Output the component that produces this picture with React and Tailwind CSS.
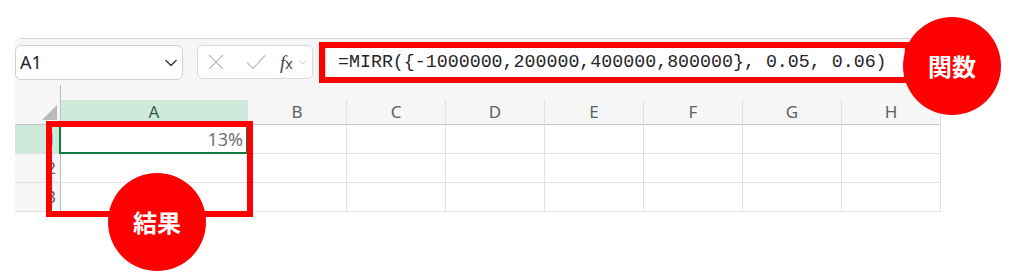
import React from 'react';

// Columnas y filas visibles de la hoja
const columnas = ['A', 'B', 'C', 'D', 'E', 'F', 'G', 'H'];
const filas = [1, 2, 3];

const Chevron = ({ className }) => (
  <svg viewBox="0 0 12 8" className={className} fill="none" stroke="currentColor" strokeWidth="1.6" strokeLinecap="round" strokeLinejoin="round">
    <path d="M1 1.5 6 6.5 11 1.5" />
  </svg>
);

const Etiqueta = ({ texto, className }) => (
  <div className={`absolute w-[98px] h-[98px] rounded-full bg-[#ff0000] flex items-center justify-center text-white text-[24px] font-bold font-['Noto_Sans_CJK_JP',sans-serif] ${className}`}>
    {texto}
  </div>
);

const App = () => {
  return (
    <div className="relative w-[1024px] h-[275px] bg-white overflow-hidden font-['Noto_Sans',sans-serif]">
      <div className="ml-[15px] mt-[38px] w-[926px] bg-[#f6f6f6] border-t border-[#d6d6d6] rounded-tl-md">
        {/* Barra de fórmulas */}
        <div className="flex items-start pt-[6px]">
          <div className="w-[168px] h-[35px] bg-white border border-[#d1d1d1] rounded-md flex items-center justify-between pl-[4px] pr-[5px]">
            <span className="text-[18px] text-[#242424]">A1</span>
            <Chevron className="w-[12px] h-[8px] text-[#424242]" />
          </div>
          <div className="ml-[14px] w-[116px] h-[34px] bg-white border border-[#d9d9d9] rounded-md flex items-center pl-[10px]">
            <svg viewBox="0 0 16 16" className="w-[16px] h-[16px] text-[#bdbdbd]" fill="none" stroke="currentColor" strokeWidth="1.2">
              <path d="M1 1 15 15M15 1 1 15" />
            </svg>
            <svg viewBox="0 0 20 16" className="ml-[22px] w-[20px] h-[16px] text-[#bdbdbd]" fill="none" stroke="currentColor" strokeWidth="1.2">
              <path d="M1 8.5 7 14.5 19 1.5" />
            </svg>
            <span className="ml-[14px] text-[19px] italic text-[#424242] font-['Liberation_Serif',serif] leading-none">
              f<span className="text-[14px] not-italic font-['Noto_Sans',sans-serif]">x</span>
            </span>
            <Chevron className="ml-[6px] w-[7px] h-[5px] text-[#c2c2c2]" />
          </div>
          <div className="ml-[12px] w-[580px] h-[35px] bg-white border border-[#d1d1d1] rounded-md flex items-center pl-[12px]">
            <span className="text-[18.3px] text-[#262626] font-['Liberation_Mono',monospace] whitespace-nowrap">
              =MIRR({'{'}-1000000,200000,400000,800000{'}'}, 0.05, 0.06)
            </span>
          </div>
        </div>

        <div className="h-[20px] pt-[5px]">
          <div className="ml-[45px] w-px h-[15px] bg-[#bdbdbd]" />
        </div>

        {/* Cuadrícula */}
        <div className="grid grid-cols-[46px_187px_repeat(7,99px)]">
          <div className="h-[25px] border-r border-b border-r-[#bdbdbd] border-b-[#c6c6c6] flex items-end justify-end pr-[3px] pb-[4px]">
            <svg viewBox="0 0 15 15" className="w-[15px] h-[15px]">
              <polygon points="15,0 15,15 0,15" fill="#b9b9b9" />
            </svg>
          </div>
          {columnas.map((c, i) => (
            <div
              key={c}
              className={`h-[25px] border-b border-b-[#c6c6c6] border-r border-r-[#e0e0e0] flex items-center justify-center text-[17px] ${i === 0 ? 'bg-[#cfeadb] text-[#3b5a47]' : 'text-[#616161]'}`}
            >
              {c}
            </div>
          ))}

          {filas.map((f) => (
            <React.Fragment key={f}>
              <div className={`h-[29px] border-r border-r-[#bdbdbd] border-b border-b-[#e1e1e1] flex items-center justify-end pr-[4px] text-[17px] text-[#616161] ${f === 1 ? 'bg-[#cfeadb]' : ''}`}>
                {f}
              </div>
              {columnas.map((c) => (
                <div key={c} className="relative h-[29px] bg-white border-r border-b border-[#e1e1e1] flex items-center justify-end pr-[4px]">
                  {f === 1 && c === 'A' && (
                    <>
                      <span className="text-[18px] text-[#737373]">13%</span>
                      <div className="absolute -left-[2px] -top-[1px] -right-[1px] -bottom-[1px] border-2 border-[#107c41]" />
                    </>
                  )}
                </div>
              ))}
            </React.Fragment>
          ))}
        </div>
      </div>

      {/* Anotaciones */}
      <div className="absolute left-[319px] top-[42px] w-[592px] h-[41px] border-[6px] border-[#ff0000]" />
      <div className="absolute left-[46px] top-[121px] w-[207px] h-[96px] border-[6px] border-[#ff0000]" />
      <Etiqueta texto="関数" className="left-[903px] top-[17px]" />
      <Etiqueta texto="結果" className="left-[108px] top-[173px]" />
    </div>
  );
};

export default App;
